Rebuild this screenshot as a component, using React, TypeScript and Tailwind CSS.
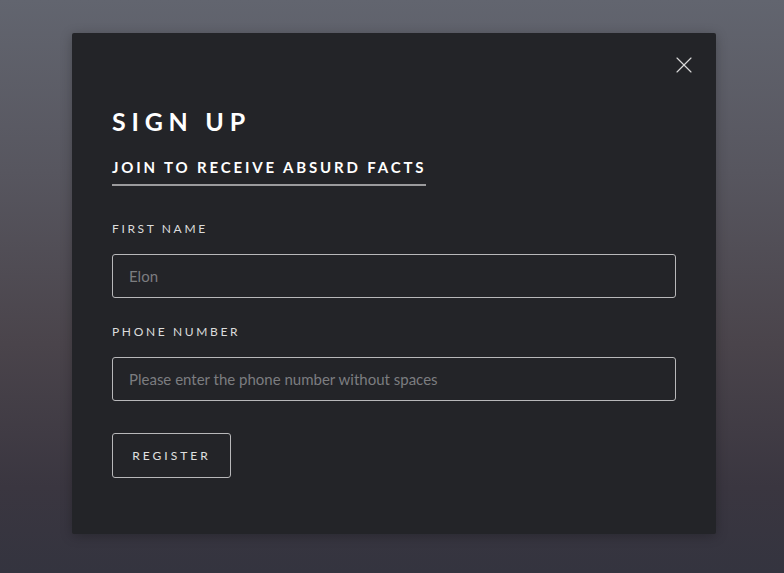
import { X } from "lucide-react";

export default function App() {
  return (
    <div className="w-[784px] h-[573px] overflow-hidden bg-[linear-gradient(180deg,#62656f_0%,#57565f_30%,#4a444b_60%,#3a3640_85%,#34343f_100%)] pt-[33px] pl-[72px] font-['Lato',sans-serif]">
      <div className="relative w-[644px] h-[501px] rounded-[2px] bg-[#232428] shadow-[0_2px_12px_rgba(0,0,0,0.25)] px-10 pt-[73px]">
        <button className="absolute right-[18px] top-[18px] text-[#d8d8d8]">
          <X size={28} strokeWidth={1} />
        </button>

        <h1 className="text-[25px] leading-[30px] font-bold tracking-[0.23em] text-white">
          SIGN UP
        </h1>
        <h2 className="mt-[21px] inline-block border-b-2 border-[#9b9b9d] pb-[7px] text-[15px] leading-[20px] font-bold tracking-[0.19em] text-white">
          JOIN TO RECEIVE ABSURD FACTS
        </h2>

        <form className="mt-[35px] flex flex-col">
          <label className="text-[12px] leading-[16px] tracking-[0.22em] text-[#dcdcdc]">
            FIRST NAME
          </label>
          <input
            placeholder="Elon"
            className="mt-[17px] h-[44px] w-full rounded-[3px] border border-[#b8b8ba] bg-transparent px-4 text-[15px] text-white placeholder:text-[#7c7d80] outline-none"
          />
          <label className="mt-[26px] text-[12px] leading-[16px] tracking-[0.22em] text-[#dcdcdc]">
            PHONE NUMBER
          </label>
          <input
            placeholder="Please enter the phone number without spaces"
            className="mt-[17px] h-[44px] w-full rounded-[3px] border border-[#b8b8ba] bg-transparent px-4 text-[15px] text-white placeholder:text-[#7c7d80] outline-none"
          />
          <div className="mt-[32px]">
            <button
              type="button"
              className="h-[45px] w-[119px] rounded-[3px] border border-[#b8b8ba] text-[12px] tracking-[0.25em] text-[#e0e0e0]"
            >
              REGISTER
            </button>
          </div>
        </form>
      </div>
    </div>
  );
}
